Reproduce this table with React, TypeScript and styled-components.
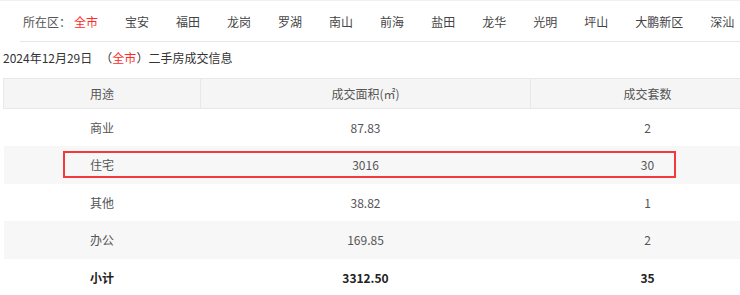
import React from "react";
import styled, { createGlobalStyle } from "styled-components";

const GlobalStyle = createGlobalStyle`
  html, body {
    margin: 0;
    padding: 0;
    background: #fff;
    overflow: hidden;
    font-family: "Noto Sans CJK SC", "Noto Sans", sans-serif;
    color: #555;
  }
`;

const Page = styled.div`
  width: 740px;
  border-top: 1px solid #f0f0f0;
`;

const AreaBar = styled.div`
  display: flex;
  align-items: center;
  height: 40px;
  margin-left: 20px;
  padding-left: 3px;
  border-bottom: 1px solid #e6e6e6;
  font-size: 12px;
  white-space: nowrap;
`;

const AreaLabel = styled.span`
  width: 52px;
  margin-right: 3px;
  color: #555;
`;

const AreaItem = styled.span<{ $active?: boolean }>`
  margin-right: 27px;
  color: ${(p) => (p.$active ? "#ff2a2a" : "#444")};
  cursor: pointer;
`;

const Title = styled.div`
  height: 36px;
  line-height: 32px;
  padding-left: 3px;
  font-size: 12px;
  color: #333;
  white-space: nowrap;
`;

const Red = styled.span`
  color: #ff2a2a;
`;

const TableWrap = styled.div`
  position: relative;
  margin-left: 3px;
  width: 761px;
`;

const Table = styled.table`
  width: 761px;
  border-collapse: collapse;
  table-layout: fixed;
  font-size: 12px;
`;

const HeadCell = styled.th`
  height: 29px;
  padding: 0;
  background: #f5f5f5;
  border: 1px solid #e8e8e8;
  font-weight: normal;
  color: #555;
  text-align: center;
`;

const Row = styled.tr<{ $striped?: boolean; $total?: boolean }>`
  height: 37.5px;
  background: ${(p) => (p.$striped ? "#f7f7f7" : "#fff")};
  font-weight: ${(p) => (p.$total ? "bold" : "normal")};
  color: ${(p) => (p.$total ? "#222" : "#555")};
`;

const Cell = styled.td`
  padding: 0;
  text-align: center;
`;

const Highlight = styled.div`
  position: absolute;
  left: 60px;
  top: 73px;
  width: 609px;
  height: 23px;
  border: 2px solid #f23a3a;
  pointer-events: none;
`;

const areas = [
  "全市",
  "宝安",
  "福田",
  "龙岗",
  "罗湖",
  "南山",
  "前海",
  "盐田",
  "龙华",
  "光明",
  "坪山",
  "大鹏新区",
  "深汕",
];

const rows = [
  { use: "商业", area: "87.83", count: "2" },
  { use: "住宅", area: "3016", count: "30" },
  { use: "其他", area: "38.82", count: "1" },
  { use: "办公", area: "169.85", count: "2" },
];

export default function App() {
  return (
    <Page>
      <GlobalStyle />
      <AreaBar>
        <AreaLabel>所在区：</AreaLabel>
        {areas.map((a, i) => (
          <AreaItem key={a} $active={i === 0}>
            {a}
          </AreaItem>
        ))}
      </AreaBar>
      <Title>
        2024年12月29日 &nbsp;&nbsp;（<Red>全市</Red>）二手房成交信息
      </Title>
      <TableWrap>
        <Table>
          <colgroup>
            <col style={{ width: 197 }} />
            <col style={{ width: 330 }} />
            <col style={{ width: 234 }} />
          </colgroup>
          <thead>
            <tr>
              <HeadCell>用途</HeadCell>
              <HeadCell>成交面积(㎡)</HeadCell>
              <HeadCell>成交套数</HeadCell>
            </tr>
          </thead>
          <tbody>
            {rows.map((r, i) => (
              <Row key={r.use} $striped={i % 2 === 1}>
                <Cell>{r.use}</Cell>
                <Cell>{r.area}</Cell>
                <Cell>{r.count}</Cell>
              </Row>
            ))}
            <Row $total>
              <Cell>小计</Cell>
              <Cell>3312.50</Cell>
              <Cell>35</Cell>
            </Row>
          </tbody>
        </Table>
        <Highlight />
      </TableWrap>
    </Page>
  );
}
